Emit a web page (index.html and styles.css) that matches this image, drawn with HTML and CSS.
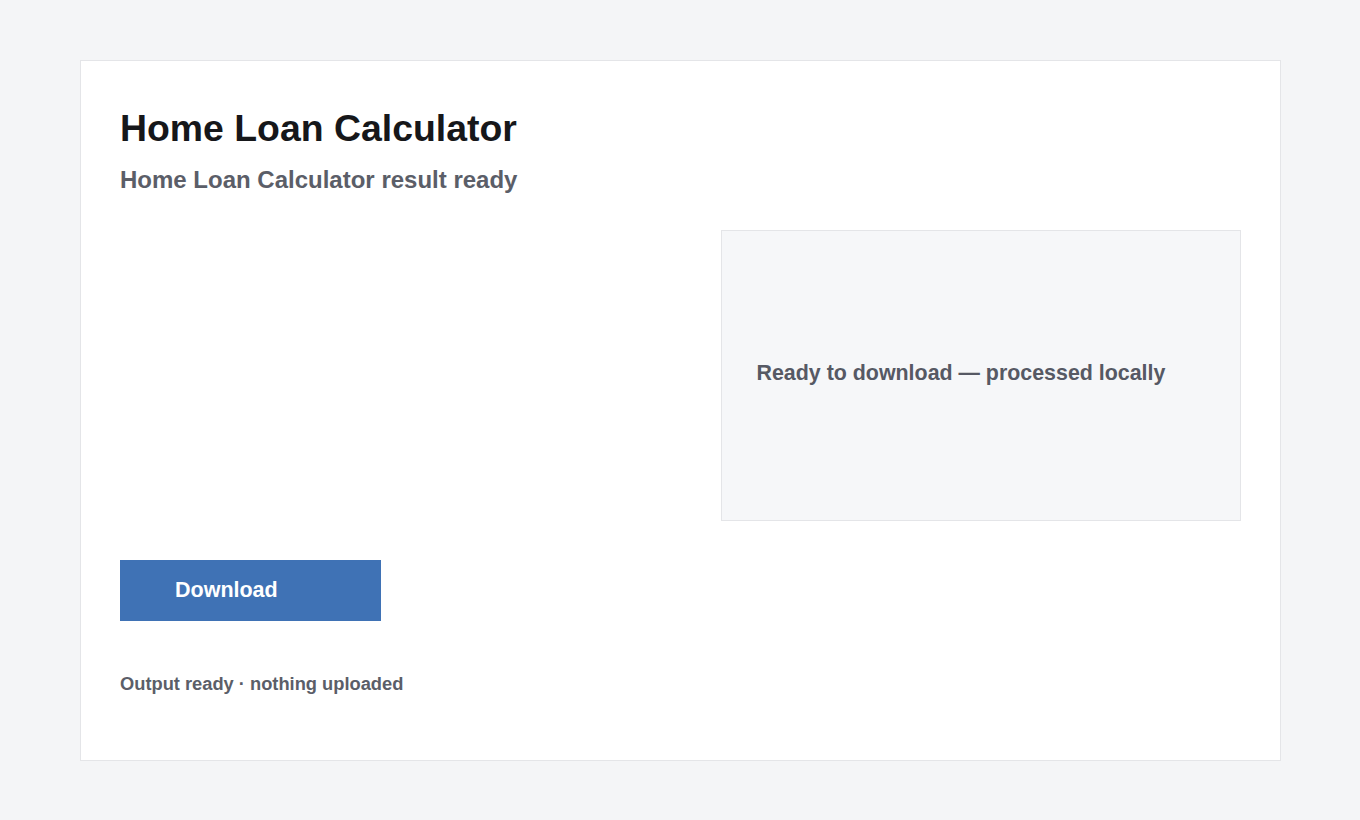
FILE: index.html
```html
<!DOCTYPE html>
<html lang="en">
<head>
  <meta charset="UTF-8" />
  <meta name="viewport" content="width=device-width, initial-scale=1.0">
  <title>Home Loan Calculator</title>
  <link rel="stylesheet" href="styles.css">
</head>
<body>
  <div class="container">
    <h1>Home Loan Calculator</h1>
    <p class="subtitle">Home Loan Calculator result ready</p>
    <div class="result-grid">
      <div class="result-side"></div>
      <div class="result-box">Ready to download — processed locally</div>
    </div>
    <button type="button" class="download-btn">Download</button>
    <p class="status">Output ready · nothing uploaded</p>
  </div>
</body>
</html>
```

FILE: styles.css
```css
body {
  font-family: "Liberation Sans", Arial, sans-serif;
  background-color: #f4f5f7;
  margin: 0;
  padding: 60px 80px;
}
.container {
  width: 1201px;
  height: 701px;
  box-sizing: border-box;
  padding: 39px;
  background-color: #fff;
  border: 1px solid #e4e5e8;
}
h1 {
  margin: 0;
  font-size: 37.4px;
  line-height: 56px;
  color: #16171a;
}
.subtitle {
  margin: 10px 0 0;
  font-size: 24px;
  font-weight: bold;
  line-height: 28px;
  color: #5b5e68;
}
.result-grid {
  display: grid;
  grid-template-columns: 1fr 1fr;
  gap: 80px;
  margin-top: 36px;
}
.result-box {
  height: 291px;
  box-sizing: border-box;
  display: flex;
  align-items: center;
  padding: 0 35px 4px;
  background-color: #f6f7f9;
  border: 1px solid #e4e5e8;
  font-size: 21.4px;
  font-weight: bold;
  color: #565964;
}
.download-btn {
  display: block;
  margin-top: 39px;
  width: 261px;
  height: 61px;
  padding: 0 0 0 55px;
  text-align: left;
  border: none;
  background-color: #3f72b5;
  color: #fff;
  font-family: inherit;
  font-size: 21.5px;
  font-weight: bold;
  cursor: pointer;
}
.status {
  margin: 52px 0 0;
  font-size: 18.3px;
  font-weight: bold;
  line-height: 22px;
  color: #5b5e68;
}
```
